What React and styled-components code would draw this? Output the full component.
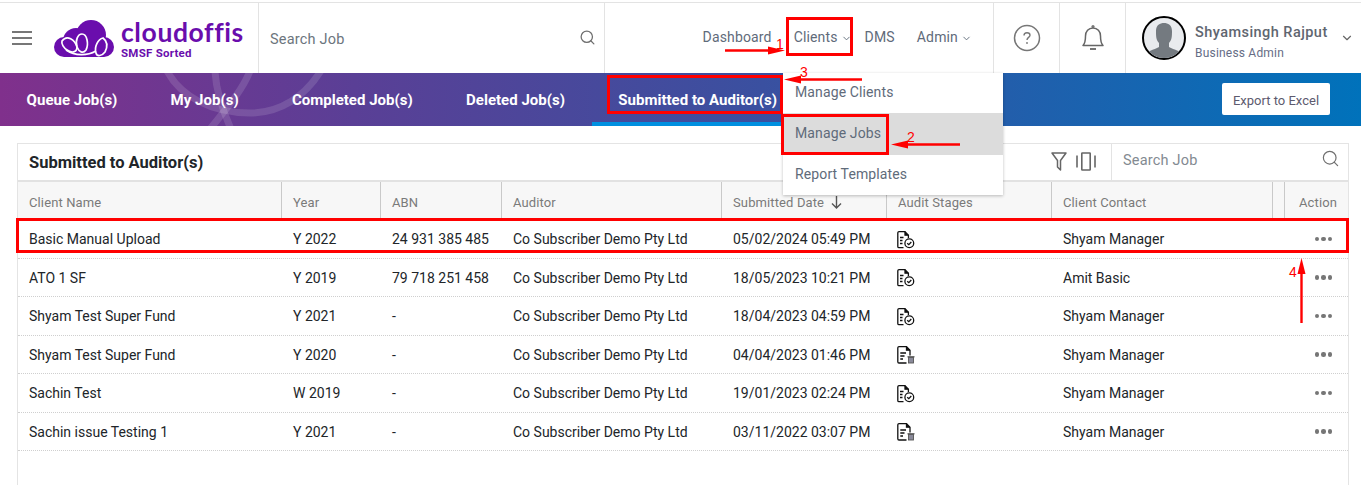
import React from 'react';
import styled, { createGlobalStyle } from 'styled-components';
import { ChevronDown, Search } from 'lucide-react';

const Global = createGlobalStyle`
  html, body { margin: 0; padding: 0; background: #fff; }
  body { font-family: Roboto, "Liberation Sans", sans-serif; color: #212529; }
  #root { width: 1361px; height: 485px; overflow: hidden; position: relative; }
  * { box-sizing: border-box; }
`;

const Page = styled.div`position: relative; width: 1361px; height: 485px; overflow: hidden; background: #fff; padding-top: 2px;`;

const Header = styled.header`
  display: flex; height: 71px; border-top: 1px solid #e3e3e3; background: #fff; align-items: stretch;
`;
const Burger = styled.div`
  width: 53px; padding: 28px 0 0 12px; flex: none;
  span { display: block; width: 20px; height: 2px; background: #777; margin-bottom: 4px; }
`;
const LogoCell = styled.div`width: 206px; flex: none; display: flex; align-items: flex-start; padding-top: 17px; gap: 6px; border-right: 1px solid #e3e3e3;`;
const LogoText = styled.div`display: flex; flex-direction: column; margin-top: -1px;`;
const LogoName = styled.div`font: 700 26.5px/26px Lato, sans-serif; color: #6a0dad; letter-spacing: .6px;`;
const LogoTag = styled.div`font: 700 11.5px/12px Roboto, sans-serif; color: #6a0dad; letter-spacing: .25px; margin-top: 2px;`;
const SearchCell = styled.div`
  width: 346px; flex: none; display: flex; align-items: center; justify-content: space-between;
  padding: 2px 8px 0 11px; border-right: 1px solid #e3e3e3; font-size: 14.5px; color: #6c757d; letter-spacing: .2px;
  svg { margin-top: -4px; }
`;
const Nav = styled.nav`flex: 1; display: flex; justify-content: flex-end; gap: 22px; padding: 24px 21px 0 0; border-right: 1px solid #e3e3e3;`;
const NavItem = styled.div`
  font-size: 14px; line-height: 20px; color: #5f6b7a; display: flex; align-items: flex-start; gap: 3px; letter-spacing: .15px;
  margin-right: ${p => p.$tight ? '-9px' : '0'};
  svg { margin-top: 6px; }
`;
const IconCell = styled.div`width: 66px; flex: none; display: flex; align-items: center; justify-content: center; border-right: 1px solid #e3e3e3; color: #777;`;
const User = styled.div`width: 235px; flex: none; display: flex; padding: 13px 0 0 16px; gap: 9px;`;
const Avatar = styled.div`width: 44px; height: 44px; border-radius: 50%; border: 2px solid #000; background: #e9ebee; overflow: hidden; flex: none;`;
const UserText = styled.div`padding-top: 7px;`;
const UserName = styled.div`font-size: 14.5px; line-height: 20px; font-weight: 500; color: #5f6670; letter-spacing: .45px;`;
const UserRole = styled.div`font-size: 12px; line-height: 16px; color: #666d85; letter-spacing: .2px; margin-top: 2px;`;
const UserCaret = styled.div`color: #666; margin: 14px 0 0 3px;`;

const Banner = styled.div`
  position: relative; height: 53px; display: flex; justify-content: space-between; overflow: hidden;
  background: linear-gradient(90deg, #80308c 0%, #5a3f96 26%, #3a50a0 56%, #0072bb 100%);
`;
const Watermark = styled.svg`position: absolute; left: 150px; top: 0; width: 200px; height: 53px;`;
const Tabs = styled.div`display: flex; position: relative;`;
const Tab = styled.div`
  padding: 0 26.6px; height: 53px; line-height: 54px; font-size: 15px; font-weight: 700; color: #fff; white-space: nowrap; letter-spacing: .02px;
  border-bottom: ${p => p.$active ? '4px solid #0090e0' : '0'};
`;
const ExportBtn = styled.div`
  position: relative; margin: 10px 31px 0 0; width: 108px; height: 32px; background: #fff; border-radius: 2px;
  font-size: 13px; line-height: 35px; text-align: center; color: #5d5a6e;
`;

const Card = styled.section`
  margin: 17px 12px 0 17px; border: 1px solid #e4e4e4; border-bottom: 0; height: 360px; background: #fff;
`;
const CardHead = styled.div`height: 38px; display: flex; align-items: stretch; border-bottom: 2px solid #e2e2e2;`;
const CardTitle = styled.h2`flex: 1; margin: 0; padding: 0 0 0 11px; font-size: 16.5px; line-height: 37px; font-weight: 700; color: #212529;`;
const Tools = styled.div`display: flex; gap: 9px; align-items: center; padding: 0 15px 2px 0;`;
const CardSearch = styled.div`
  width: 237px; border-left: 1px solid #e3e3e3; display: flex; justify-content: space-between; padding: 0 8px 0 11px;
  font-size: 14.5px; line-height: 33px; color: #838a91; letter-spacing: .2px;
  svg { margin-top: 5px; }
`;
const Row = styled.div`
  display: grid; grid-template-columns: 264px 99px 121px 220px 165px 165px 221px 11px 1fr;
  height: ${p => p.$h || 38.5}px; align-items: center;
  background: ${p => p.$head ? '#f7f7f7' : '#fff'};
  border-bottom: ${p => p.$head ? '0' : '1px dotted #cfcfcf'};
`;
const HeadCell = styled.div`
  height: 100%; padding: 3px 0 0 ${p => p.$last ? '15px' : '11px'}; border-right: ${p => p.$last ? 0 : '1px solid #c9c9c9'}; font-size: 13px; color: #7a7a7a; letter-spacing: .12px;
  display: flex; align-items: center; gap: 7px; white-space: nowrap; line-height: 1;
`;
const Cell = styled.div`padding-left: 11px; font-size: 14px; color: #212529; white-space: nowrap; line-height: 1; padding-top: 1px; svg { display: block; margin: 1px 0 0 -1px; }`;
const Dots = styled.div`
  display: flex; gap: 2px; justify-content: flex-end; padding-right: 16px; grid-column: 8 / span 2;
  i { width: 4.5px; height: 4.5px; border-radius: 50%; background: #767676; }
`;

const Menu = styled.div`
  position: absolute; left: 783px; top: 73px; width: 220px; height: 122px; background: #fff;
  box-shadow: 0 1px 3px rgba(0,0,0,.25);
`;
const MenuItem = styled.div`
  height: ${p => p.$on ? 42 : 40}px; padding-left: 12px; font-size: 14px; line-height: ${p => p.$on ? 40 : 38}px; color: #5f6b7a; letter-spacing: .12px;
  background: ${p => p.$on ? '#dcdcdc' : '#fff'};
`;

const RedBox = styled.div`position: absolute; border: 3px solid #f00; left: ${p => p.$x}px; top: ${p => p.$y}px; width: ${p => p.$w}px; height: ${p => p.$h}px;`;
const Num = styled.div`position: absolute; color: #f00; font: 14px/14px "Liberation Sans", sans-serif; left: ${p => p.$x}px; top: ${p => p.$y}px;`;
const ArrowLayer = styled.svg`position: absolute; left: 0; top: 0; width: 1361px; height: 485px; pointer-events: none;`;

const Logo = () => (
  <svg width="62" height="37" viewBox="0 0 62 37">
    <g fill="#6a0dad">
      <circle cx="11" cy="27" r="10" />
      <circle cx="23" cy="21" r="13" />
      <circle cx="38" cy="15" r="15" />
      <circle cx="51" cy="27" r="10" />
      <rect x="11" y="20" width="40" height="17" />
    </g>
    <g fill="none" stroke="#fff" strokeWidth="1.7">
      <path d="M9 21 C14 14 22 20 24 27 C24 33 18 33 14 30 C11 28 8 24 9 21 Z" />
      <path d="M29 14 C34 14 36 24 33 30 C30 34 26 32 24 27 C22 20 25 14 29 14 Z" />
      <path d="M50 18 C54 21 55 26 52 32 C49 36 44 37 43 33 C41 27 45 19 50 18 Z" />
      <path d="M13 30 C22 36 34 36 43 31" />
    </g>
  </svg>
);

const Person = () => (
  <svg width="40" height="40" viewBox="0 0 40 40">
    <path d="M0 40 V38 C2 33 10 32 15 29 V25 C12 22 12 18 12 13 C12 7 16 5 20 5 C24 5 28 7 28 13 C28 18 28 22 25 25 V29 C30 32 38 33 40 38 V40 Z" fill="#747a80"/>
  </svg>
);

const HelpIcon = () => (
  <svg width="28" height="28" viewBox="0 0 28 28" fill="none" stroke="#777" strokeWidth="1.5">
    <circle cx="14" cy="14" r="12.5" />
    <path d="M11 11.5 C11 9.5 12.5 8.7 14 8.7 C15.8 8.7 17 9.8 17 11.2 C17 13.3 14 13.5 14 16" strokeWidth="1.4" />
    <circle cx="14" cy="19" r=".9" fill="#777" stroke="none" />
  </svg>
);

const BellIcon = () => (
  <svg width="24" height="28" viewBox="0 0 24 28" fill="none" stroke="#666" strokeWidth="1.5">
    <circle cx="12" cy="2.5" r="1.6" fill="#777" stroke="none" />
    <path d="M2 21.5 C4.5 19 4.5 16 4.5 12 C4.5 7.5 7.5 4 12 4 C16.5 4 19.5 7.5 19.5 12 C19.5 16 19.5 19 22 21.5 Z" strokeLinejoin="round" />
    <path d="M9 25 H15" strokeWidth="1.8" />
  </svg>
);

const FunnelIcon = () => (
  <svg width="16" height="19" viewBox="0 0 16 19" fill="none" stroke="#666" strokeWidth="1.5">
    <path d="M1 1 H15 L9.5 8.5 V18 L6.5 15 V8.5 Z" strokeLinejoin="round" />
  </svg>
);

const ColumnsIcon = () => (
  <svg width="20" height="19" viewBox="0 0 20 19" fill="none" stroke="#666" strokeWidth="1.6">
    <path d="M1 3.5 V15.5 M19 3.5 V15.5" />
    <rect x="5.8" y="1" width="8.4" height="17" rx=".5" />
  </svg>
);

const DocCheck = () => (
  <svg width="19" height="18" viewBox="0 0 19 18" fill="none" stroke="#111" strokeWidth="1.3">
    <path d="M6.5 16.6 H2 A1.2 1.2 0 0 1 .8 15.4 V1.8 A1.2 1.2 0 0 1 2 .7 H8 L11.4 4.2 V7"/>
    <path d="M8 .7 V4.2 H11.4" fill="#111"/>
    <path d="M3 6.5 H6.5 M3 9.5 H5.5 M3 12.5 H5.5"/>
    <circle cx="12.3" cy="12.2" r="4.4"/>
    <path d="M10.2 12.2 L11.8 13.7 L14.3 11"/>
  </svg>
);
const DocLock = () => (
  <svg width="19" height="18" viewBox="0 0 19 18" fill="none" stroke="#111" strokeWidth="1.3">
    <path d="M9.5 17 H2 A1.2 1.2 0 0 1 .8 15.8 V1.8 A1.2 1.2 0 0 1 2 .7 H9.5 L13 4.2 V9.5"/>
    <path d="M9.5 .7 V4.2 H13" fill="#111"/>
    <path d="M3.3 7 H9 M3.3 10 H7.5 M3.3 13 H6"/>
    <rect x="11.5" y="11.5" width="5" height="5.5" fill="#8a8a9a" stroke="#555" strokeWidth=".9"/>
    <path d="M10.5 10.8 H17.5" stroke="#555"/>
  </svg>
);

const COLS = ['Client Name','Year','ABN','Auditor','Submitted Date','Audit Stages','Client Contact',''];
const DATA = [
  ['Basic Manual Upload','Y 2022','24 931 385 485','Co Subscriber Demo Pty Ltd','05/02/2024 05:49 PM','c','Shyam Manager'],
  ['ATO 1 SF','Y 2019','79 718 251 458','Co Subscriber Demo Pty Ltd','18/05/2023 10:21 PM','c','Amit Basic'],
  ['Shyam Test Super Fund','Y 2021','-','Co Subscriber Demo Pty Ltd','18/04/2023 04:59 PM','c','Shyam Manager'],
  ['Shyam Test Super Fund','Y 2020','-','Co Subscriber Demo Pty Ltd','04/04/2023 01:46 PM','l','Shyam Manager'],
  ['Sachin Test','W 2019','-','Co Subscriber Demo Pty Ltd','19/01/2023 02:24 PM','c','Shyam Manager'],
  ['Sachin issue Testing 1','Y 2021','-','Co Subscriber Demo Pty Ltd','03/11/2022 03:07 PM','l','Shyam Manager'],
];

export default function App() {
  return (
    <Page>
      <Global />
      <Header>
        <Burger><span /><span /><span /></Burger>
        <LogoCell>
          <Logo />
          <LogoText>
            <LogoName>cloudoffis</LogoName>
            <LogoTag>SMSF Sorted</LogoTag>
          </LogoText>
        </LogoCell>
        <SearchCell>
          Search Job
          <Search size={17} strokeWidth={1.8} color="#6f6f6f" />
        </SearchCell>
        <Nav>
          <NavItem>Dashboard</NavItem>
          <NavItem $tight>Clients <ChevronDown size={11} /></NavItem>
          <NavItem>DMS</NavItem>
          <NavItem>Admin <ChevronDown size={11} /></NavItem>
        </Nav>
        <IconCell><HelpIcon /></IconCell>
        <IconCell><BellIcon /></IconCell>
        <User>
          <Avatar><Person /></Avatar>
          <UserText>
            <UserName>Shyamsingh Rajput</UserName>
            <UserRole>Business Admin</UserRole>
          </UserText>
          <UserCaret><ChevronDown size={14} /></UserCaret>
        </User>
      </Header>
      <Banner>
        <Watermark viewBox="0 0 200 53" fill="none" stroke="#fff" strokeOpacity=".13" strokeWidth="7">
          <path d="M16 -4 C30 24 62 40 100 40 C130 40 155 24 172 -4" />
          <path d="M65 -2 C66 18 72 36 81 56" />
          <path d="M100 -2 C92 18 76 36 60 56" />
        </Watermark>
        <Tabs>
          <Tab>Queue Job(s)</Tab>
          <Tab>My Job(s)</Tab>
          <Tab>Completed Job(s)</Tab>
          <Tab>Deleted Job(s)</Tab>
          <Tab $active>Submitted to Auditor(s)</Tab>
        </Tabs>
        <ExportBtn>Export to Excel</ExportBtn>
      </Banner>
      <Card>
        <CardHead>
          <CardTitle>Submitted to Auditor(s)</CardTitle>
          <Tools>
            <FunnelIcon />
            <ColumnsIcon />
          </Tools>
          <CardSearch>Search Job<Search size={19} strokeWidth={1.5} color="#6f6f6f" /></CardSearch>
        </CardHead>
        <Row $head $h={38}>
          {COLS.map((c, i) => (
            <HeadCell key={i}>
              {c}
              {c === 'Submitted Date' && (
                <svg width="11" height="13" viewBox="0 0 11 13" fill="none" stroke="#555" strokeWidth="1.4"><path d="M5.5 0 V12 M1 7.5 L5.5 12 L10 7.5" /></svg>
              )}
            </HeadCell>
          ))}
          <HeadCell $last>Action</HeadCell>
        </Row>
        {DATA.map((r, i) => (
          <Row key={i}>
            {r.map((v, j) => (
              <Cell key={j}>{v === 'c' ? <DocCheck /> : v === 'l' ? <DocLock /> : v}</Cell>
            ))}
            <Dots><i /><i /><i /></Dots>
          </Row>
        ))}
      </Card>
      <Menu>
        <MenuItem>Manage Clients</MenuItem>
        <MenuItem $on>Manage Jobs</MenuItem>
        <MenuItem>Report Templates</MenuItem>
      </Menu>
      <RedBox $x={786} $y={17} $w={67} $h={39} />
      <RedBox $x={607} $y={75} $w={176} $h={39} />
      <RedBox $x={781} $y={114} $w={108} $h={41} />
      <RedBox $x={16} $y={218} $w={1333} $h={35} />
      <ArrowLayer viewBox="0 0 1361 485" fill="#f00" stroke="#f00" strokeWidth="2.4">
        <path d="M725 50.5 H770" /><path d="M785 50.5 L768 46.5 V54.5 Z" strokeWidth="0" />
        <path d="M800 79.5 H862" /><path d="M784 79.5 L801 75.5 V83.5 Z" strokeWidth="0" />
        <path d="M905 144.5 H960" /><path d="M891 144.5 L908 140.5 V148.5 Z" strokeWidth="0" />
        <path d="M1301.5 272 V323" /><path d="M1301.5 258 L1297.5 274 H1305.5 Z" strokeWidth="0" />
      </ArrowLayer>
      <Num $x={776} $y={37}>1</Num>
      <Num $x={907} $y={130}>2</Num>
      <Num $x={800} $y={65}>3</Num>
      <Num $x={1289} $y={265}>4</Num>
    </Page>
  );
}
